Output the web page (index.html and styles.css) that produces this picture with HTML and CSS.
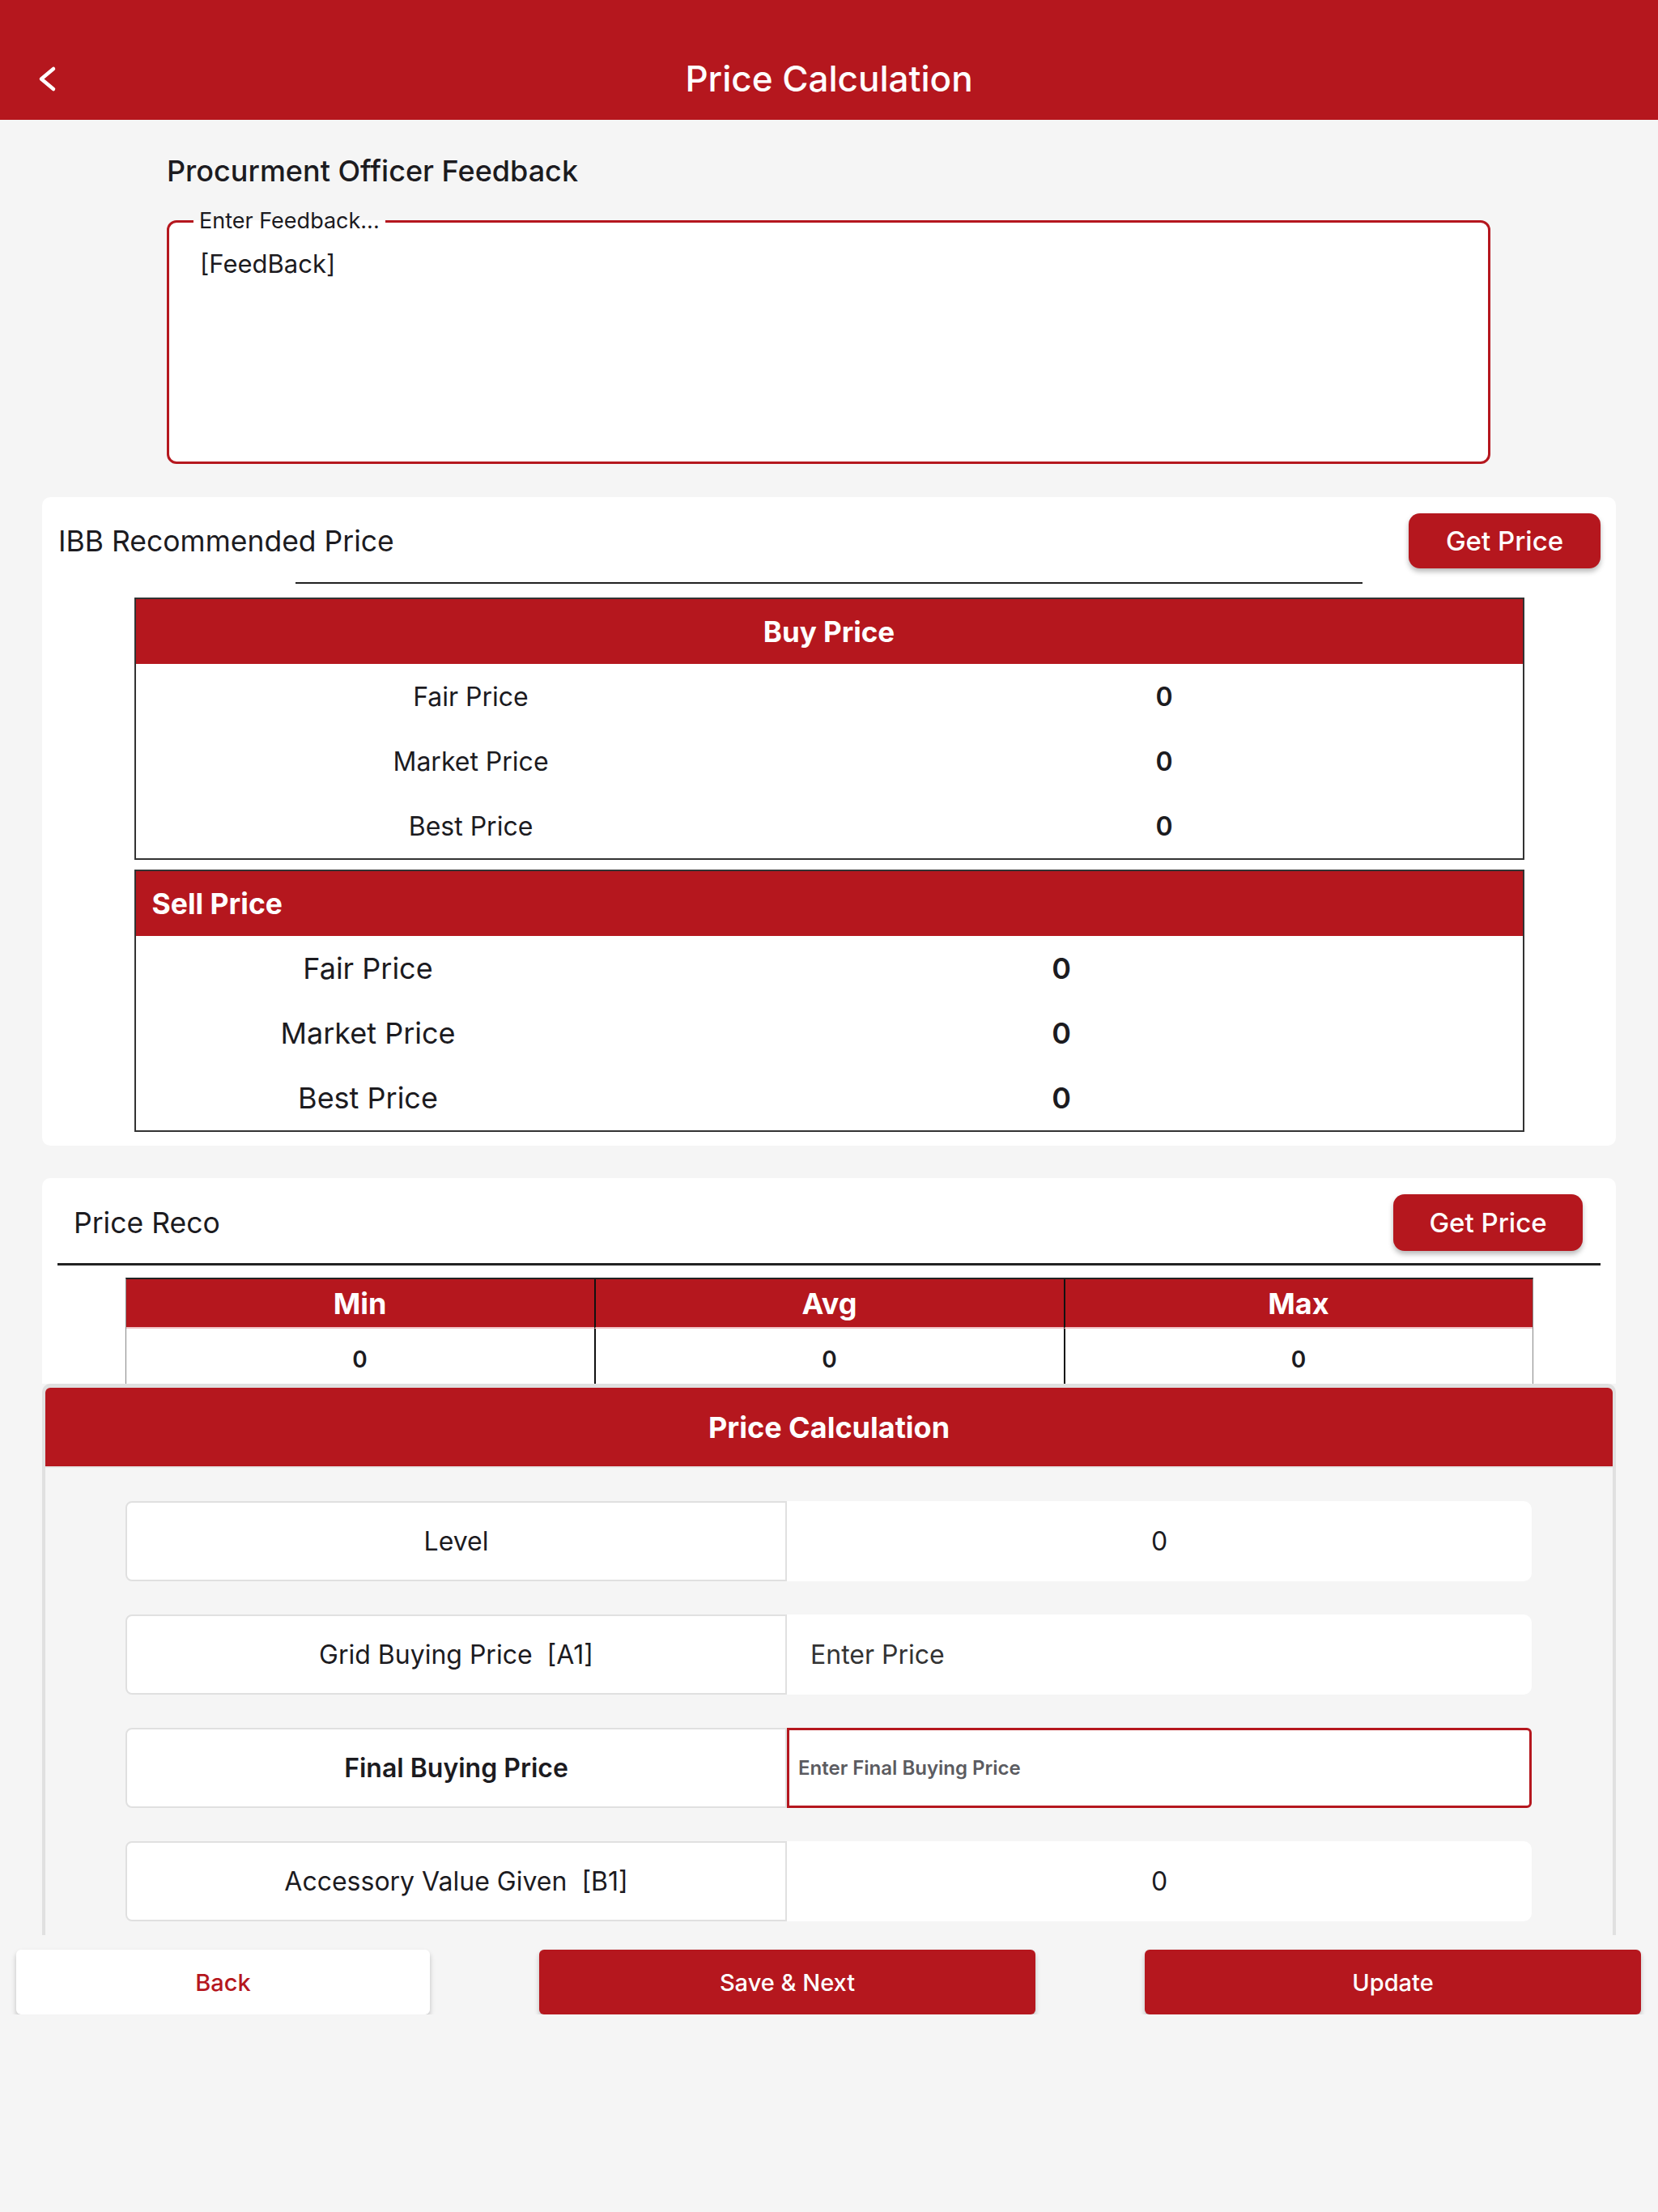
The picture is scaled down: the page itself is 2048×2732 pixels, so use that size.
FILE: index.html
```html
<!DOCTYPE html>
<html lang="en">
<head>
    <meta charset="UTF-8">
    <meta name="viewport" content="width=device-width, initial-scale=1.0">
    <title>Price Calculation</title>
    <link rel="stylesheet" href="styles.css">
</head>
<body>
    <header class="app-bar">
        <button class="back-icon" aria-label="Back">
            <svg width="30" height="40" viewBox="0 0 30 40">
                <polyline points="22,8 7,20.5 22,33" fill="none" stroke="#fff" stroke-width="4.5" stroke-linecap="round" stroke-linejoin="round"/>
            </svg>
        </button>
        <h1 class="app-title">Price Calculation</h1>
        <span></span>
    </header>

    <main class="content">
        <section class="feedback">
            <h2 class="feedback-title">Procurment Officer Feedback</h2>
            <fieldset class="feedback-box">
                <legend>Enter Feedback...</legend>
                <div class="feedback-text">[FeedBack]</div>
            </fieldset>
        </section>

        <section class="card ibb-card">
            <div class="card-head">
                <span class="card-title">IBB Recommended Price</span>
                <button class="btn-get">Get Price</button>
            </div>
            <div class="divider short"></div>

            <div class="price-table buy">
                <div class="price-table-head">Buy Price</div>
                <div class="price-row"><span>Fair Price</span><b>0</b></div>
                <div class="price-row"><span>Market Price</span><b>0</b></div>
                <div class="price-row"><span>Best Price</span><b>0</b></div>
            </div>

            <div class="price-table sell">
                <div class="price-table-head">Sell Price</div>
                <div class="price-row"><span>Fair Price</span><b>0</b></div>
                <div class="price-row"><span>Market Price</span><b>0</b></div>
                <div class="price-row"><span>Best Price</span><b>0</b></div>
            </div>
        </section>

        <section class="card reco-card">
            <div class="card-head">
                <span class="card-title">Price Reco</span>
                <button class="btn-get">Get Price</button>
            </div>
            <div class="divider wide"></div>

            <div class="reco-table">
                <div class="reco-head">Min</div>
                <div class="reco-head">Avg</div>
                <div class="reco-head">Max</div>
                <div class="reco-cell">0</div>
                <div class="reco-cell">0</div>
                <div class="reco-cell">0</div>
            </div>
        </section>

        <section class="calc-panel">
            <div class="calc-head">Price Calculation</div>
            <div class="calc-rows">
                <div class="calc-row">
                    <div class="calc-label">Level</div>
                    <div class="calc-value">0</div>
                </div>
                <div class="calc-row">
                    <div class="calc-label">Grid Buying Price&nbsp;&nbsp;[A1]</div>
                    <div class="calc-value input">Enter Price</div>
                </div>
                <div class="calc-row">
                    <div class="calc-label strong">Final Buying Price</div>
                    <div class="calc-value input focused">Enter Final Buying Price</div>
                </div>
                <div class="calc-row">
                    <div class="calc-label">Accessory Value Given&nbsp;&nbsp;[B1]</div>
                    <div class="calc-value">0</div>
                </div>
            </div>
        </section>

        <div class="actions">
            <button class="btn btn-back">Back</button>
            <button class="btn btn-red">Save &amp; Next</button>
            <button class="btn btn-red">Update</button>
        </div>
    </main>
</body>
</html>
```

FILE: styles.css
```css
body {
    background-color: #f5f5f5;
    font-family: 'Inter', 'Roboto', sans-serif;
    color: #1c1b1f;
    margin: 0;
    padding: 0;
}

button {
    font-family: inherit;
    cursor: pointer;
}

.app-bar {
    background-color: #b5171e;
    height: 148px;
    box-sizing: border-box;
    padding-top: 46px;
    display: grid;
    grid-template-columns: 120px 1fr 120px;
    align-items: center;
}

.back-icon {
    background: none;
    border: none;
    padding: 0 0 0 44px;
    display: flex;
    justify-content: flex-start;
}

.app-title {
    margin: 0;
    color: #fff;
    font-size: 44px;
    font-weight: 500;
    text-align: center;
}

/* feedback */
.feedback {
    padding: 42px 207px 0 206px;
}

.feedback-title {
    margin: 0 0 26px;
    font-size: 36px;
    font-weight: 500;
    line-height: 42px;
}

.feedback-box {
    margin: 0;
    height: 315px;
    box-sizing: border-box;
    border: 3px solid #b5171e;
    border-radius: 12px;
    background: #fff;
    padding: 19px 0 0 30px;
}

.feedback-box legend {
    font-size: 27px;
    line-height: 30px;
    padding: 0 7px;
    color: #1c1b1f;
}

.feedback-text {
    font-size: 31px;
    line-height: 38px;
    padding-left: 8px;
    color: #1c1b1f;
}

/* cards */
.card {
    background: #fff;
    border-radius: 10px;
    margin: 41px 52px 0;
}

.card-head {
    display: flex;
    align-items: center;
    justify-content: space-between;
}

.card-title {
    font-size: 35.5px;
}

.btn-get {
    background-color: #b5171e;
    color: #fff;
    border: none;
    border-radius: 14px;
    font-size: 33px;
    font-weight: 500;
    width: 237px;
    height: 68px;
    box-shadow: 0 4px 6px rgba(0, 0, 0, 0.28);
}

.divider {
    background: #222;
    margin: 0 auto;
}

.divider.short {
    width: 1318px;
    height: 2px;
    margin-top: 17px;
}

.divider.wide {
    height: 3px;
    margin: 15px 19px 0;
}

.ibb-card {
    padding-bottom: 17px;
}

.ibb-card .card-head {
    padding: 20px 19px 0 20px;
}

.price-table {
    width: 1717px;
    box-sizing: border-box;
    margin: 17px auto 0;
    border: 2px solid #333;
    background: #fff;
}

.price-table.sell {
    margin-top: 12px;
}

.price-table-head {
    background-color: #b5171e;
    color: #fff;
    height: 80px;
    display: flex;
    align-items: center;
    justify-content: center;
    font-size: 35px;
    font-weight: 700;
}

.sell .price-table-head {
    justify-content: flex-start;
    padding-left: 20px;
    font-size: 35.5px;
}

.price-row {
    display: grid;
    grid-template-columns: 828px 1fr;
    height: 80px;
    align-items: center;
    text-align: center;
    font-size: 32px;
}

.price-row b {
    font-weight: 600;
}

.sell .price-row {
    grid-template-columns: 574px 1fr;
    font-size: 36px;
}

.reco-card {
    margin-top: 40px;
    height: 254px;
    overflow: hidden;
    border-radius: 10px 10px 0 0;
}

.reco-card .card-head {
    padding: 20px 41px 0 39px;
}

.reco-card .btn-get {
    width: 234px;
    height: 70px;
}

.reco-table {
    width: 1737px;
    margin: 15px auto 0;
    display: grid;
    grid-template-columns: 578px 580px 1fr;
    border-top: 2px solid #222;
    border-left: 1px solid #888;
    border-right: 1px solid #888;
}

.reco-head {
    background-color: #b5171e;
    color: #fff;
    height: 59px;
    display: flex;
    align-items: center;
    justify-content: center;
    font-size: 36px;
    font-weight: 700;
    border-bottom: 2px solid #f0c4c6;
}

.reco-cell {
    height: 76px;
    display: flex;
    align-items: center;
    justify-content: center;
    font-size: 28px;
    font-weight: 600;
}

.reco-head + .reco-head,
.reco-cell + .reco-cell {
    border-left: 2px solid #111;
}

/* price calculation */
.calc-panel {
    margin: 0 52px;
    border: 4px solid #e0e0e0;
    border-top-width: 5px;
    border-bottom: none;
    border-radius: 10px 10px 0 0;
    background: #f5f5f5;
    padding-bottom: 17px;
}

.calc-head {
    background-color: #b5171e;
    color: #fff;
    height: 97px;
    border-radius: 6px 6px 0 0;
    border-bottom: 2px solid #e8e8e8;
    display: flex;
    align-items: center;
    justify-content: center;
    font-size: 36px;
    font-weight: 700;
}

.calc-rows {
    display: flex;
    flex-direction: column;
    gap: 41px;
    padding: 41px 100px 0 99px;
}

.calc-row {
    display: grid;
    grid-template-columns: 817px 1fr;
    height: 99px;
}

.calc-label {
    background: #fff;
    border: 2px solid #e0e0e0;
    border-radius: 8px 0 0 8px;
    display: flex;
    align-items: center;
    justify-content: center;
    font-size: 32px;
}

.calc-label.strong {
    font-weight: 600;
}

.calc-value {
    background: #fff;
    border-radius: 0 10px 10px 0;
    display: flex;
    align-items: center;
    justify-content: center;
    font-size: 32px;
}

.calc-value.input {
    justify-content: flex-start;
    padding-left: 29px;
    color: #333;
}

.calc-value.focused {
    border: 3px solid #b5171e;
    border-radius: 0 6px 6px 0;
    padding-left: 11px;
    font-size: 24px;
    font-weight: 600;
    color: #5b5b60;
}

/* bottom buttons */
.actions {
    display: flex;
    gap: 135px;
    padding: 18px 0 0 20px;
}

.btn {
    height: 80px;
    border: none;
    border-radius: 6px;
    font-size: 29px;
    font-weight: 500;
    box-shadow: 0 4px 6px rgba(0, 0, 0, 0.22);
}

.btn-back {
    width: 511px;
    background: #fff;
    color: #b5171e;
}

.btn-red {
    width: 613px;
    background-color: #b5171e;
    color: #fff;
}
```
